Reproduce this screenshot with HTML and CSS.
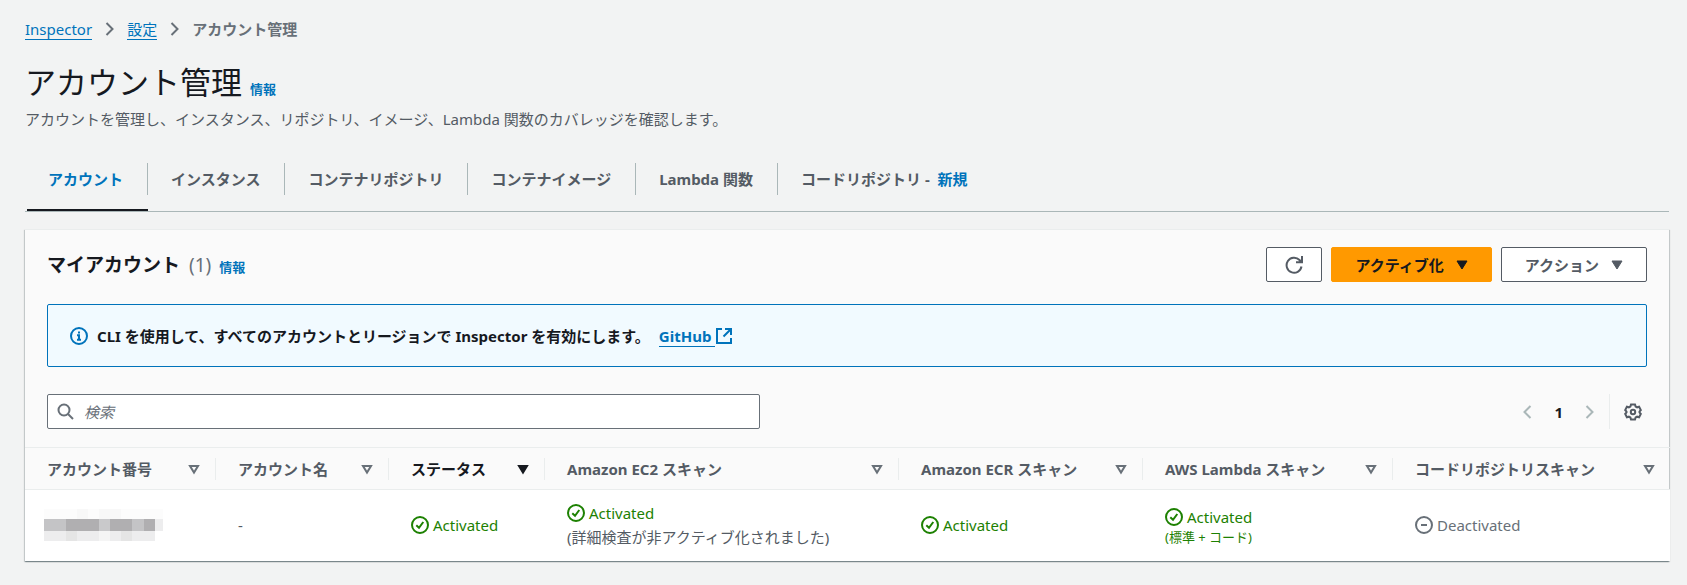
FILE: index.html
```html
<!DOCTYPE html>
<html lang="ja">
    <head>
        <meta charset="UTF-8" />
        <meta name="viewport" content="width=device-width, initial-scale=1.0" />
        <title>アカウント管理</title>
        <link rel="stylesheet" href="styles.css">
    </head>
    <body>
        <nav class="breadcrumb">
            <a href="#">Inspector</a>
            <svg class="chevron" width="9" height="14" viewBox="0 0 9 14"><path d="M1.500 1l6 6-6 6" /></svg>
            <a href="#">設定</a>
            <svg class="chevron" width="9" height="14" viewBox="0 0 9 14"><path d="M1.500 1l6 6-6 6" /></svg>
            <span class="current">アカウント管理</span>
        </nav>

        <header class="page-header">
            <div class="title-row">
                <h1>アカウント管理</h1>
                <a class="info" href="#">情報</a>
            </div>
            <p>アカウントを管理し、インスタンス、リポジトリ、イメージ、Lambda 関数のカバレッジを確認します。</p>
        </header>

        <nav class="tabs">
            <a class="tab active" href="#"><span>アカウント</span></a>
            <a class="tab" href="#"><span>インスタンス</span></a>
            <a class="tab" href="#"><span>コンテナリポジトリ</span></a>
            <a class="tab" href="#"><span>コンテナイメージ</span></a>
            <a class="tab" href="#"><span>Lambda 関数</span></a>
            <a class="tab" href="#"><span>コードリポジトリ - <em>新規</em></span></a>
        </nav>

        <main class="panel">
            <div class="panel-header">
                <div class="title-row">
                    <h2>マイアカウント <span class="count">(1)</span></h2>
                    <a class="info" href="#">情報</a>
                </div>
                <div class="actions">
                    <button class="btn refresh" aria-label="更新">
                        <svg width="18" height="18" viewBox="0 0 18 18"><path d="M16.500 10.500A7.500 7.500 0 1 1 14.500 4l2 2M17 0v6.200h-6" /></svg>
                    </button>
                    <button class="btn primary">
                        アクティブ化
                        <svg class="caret" width="12" height="10" viewBox="0 0 12 10"><path d="M1 1h10L6 9z" /></svg>
                    </button>
                    <button class="btn">
                        アクション
                        <svg class="caret" width="12" height="10" viewBox="0 0 12 10"><path d="M1 1h10L6 9z" /></svg>
                    </button>
                </div>
            </div>

            <div class="alert">
                <svg width="18" height="18" viewBox="0 0 18 18"><circle cx="9" cy="9" r="8" /><path d="M9 4.500v2M7 8.200h2v4.300M7 12.700h4" /></svg>
                <span>CLI を使用して、すべてのアカウントとリージョンで Inspector を有効にします。</span>
                <a href="#">GitHub</a>
                <svg class="external" width="16" height="16" viewBox="0 0 16 16"><path d="M6 1H1v14h14v-5M9 1h6v6M15 1L7.500 8.500" /></svg>
            </div>

            <div class="toolbar">
                <div class="search">
                    <svg width="17" height="17" viewBox="0 0 17 17"><circle cx="7" cy="7" r="5.500" /><path d="M11 11l5 5" /></svg>
                    <input type="search" placeholder="検索" aria-label="検索" />
                </div>
                <div class="pagination">
                    <button aria-label="前のページ"><svg width="9" height="14" viewBox="0 0 9 14"><path d="M7.500 1l-6 6 6 6" /></svg></button>
                    <span class="page">1</span>
                    <button aria-label="次のページ"><svg width="9" height="14" viewBox="0 0 9 14"><path d="M1.500 1l6 6-6 6" /></svg></button>
                    <button class="settings" aria-label="設定">
                        <svg width="18" height="18" viewBox="0 0 18 18"><path d="M7 1.500h4l.6 2 1.500.8 2-.6 1.700 3.300-1.300 1.500v1l1.300 1.500-1.700 3.300-2-.6-1.500.8-.6 2H7l-.6-2-1.500-.8-2 .6L1.200 11l1.300-1.500v-1L1.200 7l1.700-3.300 2 .6 1.500-.8z" /><circle cx="9" cy="9" r="2.200" /></svg>
                    </button>
                </div>
            </div>

            <table class="accounts">
                <colgroup>
                    <col class="col-number" />
                    <col class="col-name" />
                    <col class="col-status" />
                    <col class="col-ec2" />
                    <col class="col-ecr" />
                    <col class="col-lambda" />
                    <col class="col-code" />
                </colgroup>
                <thead>
                    <tr>
                        <th><div>アカウント番号 <svg class="sort" width="12" height="11" viewBox="0 0 12 11"><path d="M2 2h8L6 8.500z" /></svg></div></th>
                        <th><div>アカウント名 <svg class="sort" width="12" height="11" viewBox="0 0 12 11"><path d="M2 2h8L6 8.500z" /></svg></div></th>
                        <th class="sorted"><div>ステータス <svg class="sort" width="12" height="11" viewBox="0 0 12 11"><path d="M2 2h8L6 8.500z" /></svg></div></th>
                        <th><div>Amazon EC2 スキャン <svg class="sort" width="12" height="11" viewBox="0 0 12 11"><path d="M2 2h8L6 8.500z" /></svg></div></th>
                        <th><div>Amazon ECR スキャン <svg class="sort" width="12" height="11" viewBox="0 0 12 11"><path d="M2 2h8L6 8.500z" /></svg></div></th>
                        <th><div>AWS Lambda スキャン <svg class="sort" width="12" height="11" viewBox="0 0 12 11"><path d="M2 2h8L6 8.500z" /></svg></div></th>
                        <th><div>コードリポジトリスキャン <svg class="sort" width="12" height="11" viewBox="0 0 12 11"><path d="M2 2h8L6 8.500z" /></svg></div></th>
                    </tr>
                </thead>
                <tbody>
                    <tr>
                        <td class="masked">
                            <svg width="119" height="32" viewBox="0 0 119 32" shape-rendering="crispEdges">
                                <path fill="#fcfcfc" d="M0 0h119v10H0z" />
                                <path fill="#f8f8f8" d="M33 0h11v10H33zM55 0h22v10H55z" />
                                <path fill="#c4c4c6" d="M0 10h22v12H0zM88 10h12v12H88z" />
                                <path fill="#b0afb1" d="M22 10h33v12H22zM66 10h22v12H66zM100 10h11v12h-11z" />
                                <path fill="#c9c9cb" d="M55 10h11v12H55z" />
                                <path fill="#ededee" d="M0 22h111v10H0zM111 10h8v12h-8z" />
                                <path fill="#e5e5e5" d="M22 22h11v10H22zM77 22h11v10H77z" />
                                <path fill="#f5f5f5" d="M55 22h11v10H55z" />
                            </svg>
                        </td>
                        <td>-</td>
                        <td>
                            <div class="status ok"><svg width="18" height="18" viewBox="0 0 18 18"><circle cx="9" cy="9" r="8" /><path d="M5.300 9.300l2.700 2.500L12.300 6" /></svg>Activated</div>
                        </td>
                        <td>
                            <div class="status ok"><svg width="18" height="18" viewBox="0 0 18 18"><circle cx="9" cy="9" r="8" /><path d="M5.300 9.300l2.700 2.500L12.300 6" /></svg>Activated</div>
                            <div>(詳細検査が非アクティブ化されました)</div>
                        </td>
                        <td>
                            <div class="status ok"><svg width="18" height="18" viewBox="0 0 18 18"><circle cx="9" cy="9" r="8" /><path d="M5.300 9.300l2.700 2.500L12.300 6" /></svg>Activated</div>
                        </td>
                        <td>
                            <div class="status ok"><svg width="18" height="18" viewBox="0 0 18 18"><circle cx="9" cy="9" r="8" /><path d="M5.300 9.300l2.700 2.500L12.300 6" /></svg>Activated</div>
                            <div class="note">(標準 + コード)</div>
                        </td>
                        <td>
                            <div class="status off"><svg width="18" height="18" viewBox="0 0 18 18"><circle cx="9" cy="9" r="8" /><path d="M6 9h6" /></svg>Deactivated</div>
                        </td>
                    </tr>
                </tbody>
            </table>
        </main>
    </body>
</html>
```
FILE: styles.css
```css
* {
    margin: 0;
    padding: 0;
    box-sizing: border-box;
}

body {
    padding: 17px 18px 24px 25px;
    background-color: #f2f3f3;
    color: #545b64;
    font-family: "Noto Sans", "Noto Sans CJK JP", sans-serif;
    font-size: 15px;
    line-height: 24px;
}

svg {
    flex-shrink: 0;
    fill: none;
    stroke: currentColor;
    stroke-width: 2;
}

a {
    color: #0073bb;
    text-decoration: none;
}

button {
    font: inherit;
    color: inherit;
    cursor: pointer;
}

.breadcrumb {
    display: flex;
    align-items: center;
    gap: 13px;
    height: 24px;
}

.breadcrumb a,
.alert a {
    line-height: 20px;
    border-bottom: 1px solid #0073bb;
}

.breadcrumb .chevron {
    color: #687078;
}

.breadcrumb .current {
    color: #687078;
    font-weight: bold;
}

.title-row {
    display: flex;
    align-items: baseline;
    gap: 8px;
}

.info {
    font-size: 13px;
    font-weight: bold;
}

.page-header {
    padding-top: 20px;
}

.page-header p {
    margin-top: 4px;
}

h1 {
    color: #16191f;
    font-size: 31px;
    font-weight: normal;
    line-height: 42px;
}

h2 {
    color: #16191f;
    font-size: 19px;
    line-height: 28px;
}

.count {
    margin-left: 4px;
    color: #687078;
    font-weight: normal;
}

.tabs {
    display: flex;
    margin-top: 32px;
    padding-left: 2px;
    border-bottom: 1px solid #aab7b8;
}

.tab {
    padding-bottom: 14px;
    color: #545b64;
    font-weight: bold;
    border-bottom: 2px solid transparent;
}

.tab span {
    display: block;
    padding: 4px 24px 4px 23px;
    border-right: 1px solid #aab7b8;
}

.tab:last-child span {
    border-right: none;
}

.tab em {
    margin-left: 4px;
    color: #0073bb;
    font-style: normal;
}

.tab.active {
    color: #0073bb;
    border-bottom-color: #16191f;
}

.tab.active span {
    padding-left: 21px;
}

.panel {
    margin-top: 17px;
    background-color: #fafafa;
    border-top: 1px solid #eaeded;
    box-shadow: 0 1px 1px 0 rgb(0 28 36 / 30%),
        1px 1px 1px 0 rgb(0 28 36 / 15%),
        -1px 1px 1px 0 rgb(0 28 36 / 15%);
}

.panel-header {
    display: flex;
    justify-content: space-between;
    align-items: center;
    padding: 17px 22px 22px;
}

.actions {
    display: flex;
    gap: 9px;
}

.btn {
    display: flex;
    align-items: center;
    gap: 12px;
    height: 35px;
    padding: 0 23px;
    background-color: #ffffff;
    border: 1px solid #545b64;
    border-radius: 2px;
    font-weight: bold;
}

.btn.refresh {
    padding: 0 18px;
}

.btn.primary {
    background-color: #ff9900;
    border-color: #ff9900;
    color: #16191f;
}

.caret {
    fill: currentColor;
    stroke-width: 1;
}

.alert {
    display: flex;
    align-items: center;
    gap: 9px;
    margin: 0 22px;
    padding: 19px 22px 18px;
    color: #16191f;
    font-weight: bold;
    background-color: #f1faff;
    border: 1px solid #0073bb;
    border-radius: 2px;
}

.alert svg {
    color: #0073bb;
}

.alert a {
    padding-right: 4px;
}

.alert .external {
    margin-left: -8px;
}

.toolbar {
    display: flex;
    justify-content: space-between;
    align-items: center;
    gap: 22px;
    padding: 27px 22px 18px;
}

.search {
    display: flex;
    align-items: center;
    gap: 10px;
    width: 713px;
    height: 35px;
    padding: 0 9px;
    color: #687078;
    background-color: #ffffff;
    border: 1px solid #687078;
    border-radius: 2px;
}

.search input {
    flex: 1;
    font: inherit;
    background: none;
    border: none;
    outline: none;
}

.search input::placeholder {
    color: #687078;
    font-style: italic;
}

.pagination {
    display: flex;
    align-items: center;
    color: #16191f;
    font-weight: bold;
}

.pagination button {
    display: flex;
    align-items: center;
    height: 35px;
    background: none;
    border: none;
    color: #aab7b8;
}

.pagination .page {
    padding: 0 22px;
}

.pagination .settings {
    margin-left: 15px;
    padding: 0 5px 0 14px;
    color: #545b64;
    border-left: 1px solid #eaeded;
}

.accounts {
    width: 100%;
    table-layout: fixed;
    border-collapse: collapse;
}

.col-number {
    width: 191px;
}

.col-name {
    width: 173px;
}

.col-status {
    width: 156px;
}

.col-ec2 {
    width: 354px;
}

.col-ecr {
    width: 244px;
}

.col-lambda {
    width: 250px;
}

.col-code {
    width: 277px;
}

.accounts th {
    padding: 10px 0 9px;
    text-align: left;
    white-space: nowrap;
    border-top: 1px solid #eaeded;
    border-bottom: 1px solid #eaeded;
}

.accounts th div {
    display: flex;
    justify-content: space-between;
    align-items: center;
    height: 22px;
    padding: 0 15px 0 22px;
    border-right: 1px solid #eaeded;
}

.accounts th:last-child div {
    border-right: none;
}

.accounts .sort {
    color: #687078;
}

.accounts .sorted,
.accounts .sorted .sort {
    color: #16191f;
}

.accounts .sorted .sort {
    fill: currentColor;
}

.accounts td {
    height: 71px;
    padding: 0 0 1px 22px;
    background-color: #ffffff;
    vertical-align: middle;
}

.accounts .masked {
    padding-left: 19px;
}

.masked svg {
    display: block;
    stroke: none;
}

.status {
    display: flex;
    align-items: center;
    gap: 4px;
}

.ok,
.note {
    color: #1d8102;
}

.off {
    color: #687078;
}

.note {
    font-size: 13px;
    line-height: 16px;
}
```
